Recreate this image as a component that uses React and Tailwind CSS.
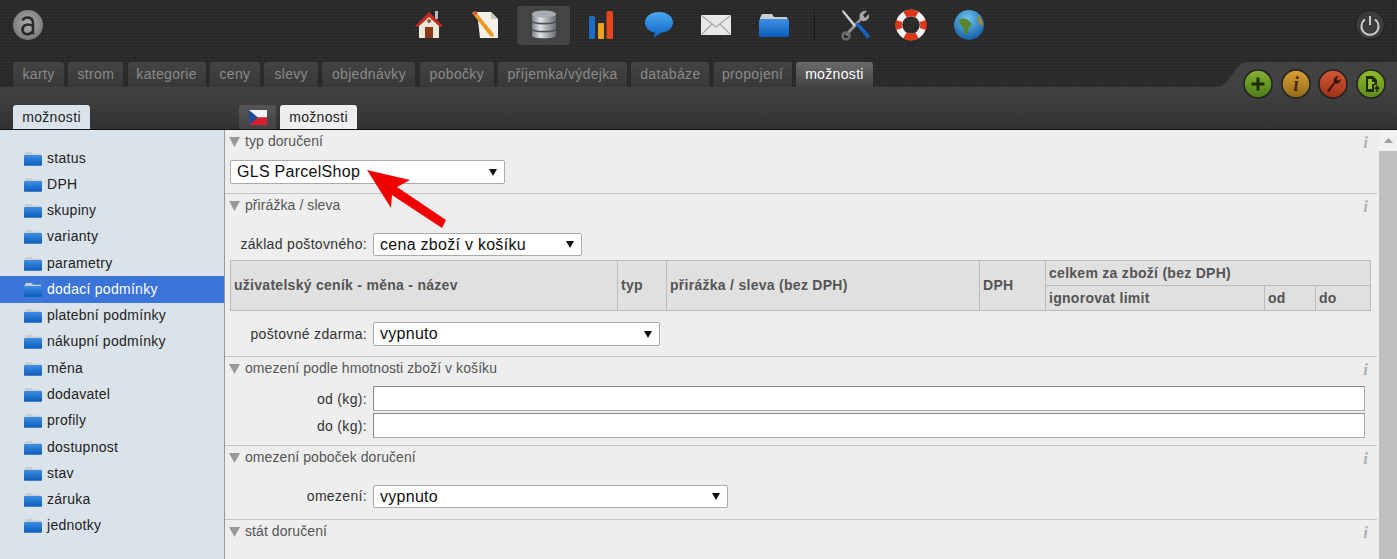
import { useId } from "react";

const mainTabs = [
  { name: "karty", width: "w-[51px]" },
  { name: "strom", width: "w-[55px]" },
  { name: "kategorie", width: "w-[78px]" },
  { name: "ceny", width: "w-[50px]" },
  { name: "slevy", width: "w-[54px]" },
  { name: "objednávky", width: "w-[93px]" },
  { name: "pobočky", width: "w-[74px]" },
  { name: "příjemka/výdejka", width: "w-[129px]" },
  { name: "databáze", width: "w-[78px]" },
  { name: "propojení", width: "w-[78px]" },
  { name: "možnosti", width: "w-[77px]" },
];
const sideItems = ["status", "DPH", "skupiny", "varianty", "parametry", "dodací podmínky", "platební podmínky", "nákupní podmínky", "měna", "dodavatel", "profily", "dostupnost", "stav", "záruka", "jednotky"];

const Logo = () => (
  <svg width="32" height="32" viewBox="0 0 32 32">
    <defs>
      <radialGradient id="logoBg" cx="0.5" cy="0.45" r="0.6">
        <stop offset="0" stopColor="#b0b0b0" />
        <stop offset="1" stopColor="#757575" />
      </radialGradient>
    </defs>
    <circle cx="16" cy="16" r="15" fill="url(#logoBg)" />
    <path d="M10.500 11.500C12.500 7.500 21 7 21 14V25.500M21 17C15 14 10.500 16 10.500 20.500C10.500 25 16 27.500 21 22.500" fill="none" stroke="#2c2c2c" strokeWidth="2.600" />
  </svg>
);

const Home = () => (
  <svg width="30" height="30" viewBox="0 0 30 30">
    <rect x="21" y="1" width="3" height="8" fill="#bbb" />
    <path d="M5 14L15 4L25 14V28H5Z" fill="#efe7d8" />
    <path d="M1 16L15 2L29 16L26 17L15 7L4 17Z" fill="#c5281c" />
    <rect x="11" y="17" width="8" height="11" fill="#8a3a1c" />
    <circle cx="15" cy="11" r="2" fill="#8a5a3a" />
  </svg>
);

const Doc = () => (
  <svg width="30" height="30" viewBox="0 0 30 30">
    <path d="M6 2H20L27 9V28H9Z" fill="#f2f0e8" />
    <path d="M20 2V9H27Z" fill="#c9c7bc" />
    <path d="M1 3L4 1L22 23L23 27L19 26Z" fill="#eb9a22" />
    <path d="M1 3L4 1L6 3.500L3 5.500Z" fill="#d9574a" />
  </svg>
);

const Database = () => {
  const id = useId();
  return (
    <svg width="28" height="32" viewBox="0 0 28 32">
      <defs>
        <linearGradient id={id} x1="0" y1="0" x2="1" y2="0">
          <stop offset="0" stopColor="#7b8088" />
          <stop offset="0.35" stopColor="#dfe2e6" />
          <stop offset="1" stopColor="#666b72" />
        </linearGradient>
      </defs>
      <path d="M2 5V27C2 30 26 30 26 27V5Z" fill={`url(#${id})`} />
      <ellipse cx="14" cy="5" rx="12" ry="3.600" fill="#a9adb3" />
      <path d="M2 12C2 15.500 26 15.500 26 12M2 20C2 23.500 26 23.500 26 20" fill="none" stroke="#4c5056" strokeWidth="1.600" />
    </svg>
  );
};

const Chart = () => (
  <svg width="26" height="30" viewBox="0 0 26 30">
    <rect x="1" y="6" width="6" height="23" rx="1.500" fill="#1c6ec4" />
    <rect x="10" y="13" width="6" height="16" rx="1" fill="#eba31f" />
    <rect x="18.500" y="1" width="6.500" height="28" rx="1.500" fill="#e5471c" />
  </svg>
);

const Bubble = () => {
  const id = useId();
  return (
    <svg width="30" height="28" viewBox="0 0 30 28">
      <defs>
        <linearGradient id={id} x1="0" y1="0" x2="0" y2="1">
          <stop offset="0" stopColor="#4aa8f0" />
          <stop offset="1" stopColor="#0f62c4" />
        </linearGradient>
      </defs>
      <path d="M15 1C7 1 1 5.500 1 11.500C1 17 6 21 11 21.500L9.500 27L17 21.800C24 21 29 17 29 11.500C29 5.500 23 1 15 1Z" fill={`url(#${id})`} />
    </svg>
  );
};

const Mail = () => (
  <svg width="30" height="20" viewBox="0 0 30 20">
    <rect x="0" y="0" width="30" height="20" rx="1" fill="#e8e8e8" />
    <path d="M1 1L15 12L29 1M1 19L11 9M29 19L19 9" fill="none" stroke="#a6a6a6" strokeWidth="1.200" />
  </svg>
);

const Folder = ({ width = 30, height = 24 }) => {
  const id = useId();
  return (
    <svg width={width} height={height} viewBox="0 0 30 24" className="shrink-0">
      <defs>
        <linearGradient id={id} x1="0" y1="0" x2="0" y2="1">
          <stop offset="0" stopColor="#3d8fe3" />
          <stop offset="1" stopColor="#0d5cbb" />
        </linearGradient>
      </defs>
      <path d="M1 5L3 1H13L15 4H28L29 7H1Z" fill="#c9ccd0" />
      <rect x="0" y="6" width="30" height="18" rx="1.500" fill={`url(#${id})`} />
    </svg>
  );
};

const Tools = () => (
  <svg width="30" height="32" viewBox="0 0 30 32">
    <path d="M5 26L21 9" stroke="#8f8f8f" strokeWidth="3" />
    <path d="M19 10C17 5 21 1 26 2L22 6L24 9L28 5C29 10 25 13 21 12Z" fill="#a8a8a8" />
    <circle cx="5" cy="27" r="3.500" fill="none" stroke="#6a6a6a" strokeWidth="2.500" />
    <path d="M2 1L4 3L15 16L13 18L2 4L1 2Z" fill="#d0d0d0" />
    <path d="M14.500 15.500L17 13L29 27L26.500 29.500Z" fill="#1565c8" />
  </svg>
);

const Ring = () => (
  <svg width="32" height="32" viewBox="0 0 32 32">
    <circle cx="16" cy="16" r="12" fill="none" stroke="#f2f2f2" strokeWidth="6.500" />
    <g fill="none" stroke="#dd3518" strokeWidth="6.500">
      <path d="M10 5.600A12 12 0 0 1 22 5.600" />
      <path d="M10 26.400A12 12 0 0 0 22 26.400" />
      <path d="M4.200 12A12 12 0 0 0 4.200 20" />
      <path d="M27.800 12A12 12 0 0 1 27.800 20" />
    </g>
  </svg>
);

const Globe = () => {
  const id = useId();
  return (
    <svg width="30" height="32" viewBox="0 0 30 32">
      <defs>
        <radialGradient id={id} cx="0.45" cy="0.3" r="0.8">
          <stop offset="0" stopColor="#6cc6f2" />
          <stop offset="1" stopColor="#0b4f9c" />
        </radialGradient>
      </defs>
      <circle cx="15" cy="16" r="15" fill={`url(#${id})`} />
      <path d="M5 11C9 8 14 10 16 13C19 15 17 19 14 18C15 22 14 25 12 26C10 23 10 19 8 17C6 16 5 14 5 11Z" fill="#58862a" />
      <path d="M23 6C27 8 29 12 29 17C26 16 24 13 24 11Z" fill="#a38a34" />
    </svg>
  );
};

const Power = () => (
  <svg width="30" height="32" viewBox="0 0 30 32">
    <circle cx="15" cy="16" r="14.500" fill="#3c3c3c" stroke="#1d1d1d" />
    <path d="M10 10.500A8.500 8.500 0 1 0 20 10.500M15 7V16" fill="none" stroke="#c9c9c9" strokeWidth="2" />
  </svg>
);

const RoundButton = ({ from, to, children }) => {
  const id = useId();
  return (
    <svg width="30" height="30" viewBox="0 0 30 30">
      <defs>
        <linearGradient id={id} x1="0" y1="0" x2="0" y2="1">
          <stop offset="0" stopColor={from} />
          <stop offset="1" stopColor={to} />
        </linearGradient>
      </defs>
      <circle cx="15" cy="15" r="14" fill={`url(#${id})`} stroke="#222" strokeWidth="1.500" />
      {children}
    </svg>
  );
};

const Flag = () => (
  <svg width="18" height="15" viewBox="0 0 18 15">
    <rect width="18" height="7.500" fill="#f3f3f3" />
    <rect y="7.500" width="18" height="7.500" fill="#d8202c" />
    <path d="M0 0L9 7.500L0 15Z" fill="#1f4e96" />
  </svg>
);

const Triangle = () => (
  <svg width="8" height="7" viewBox="0 0 8 7" className="shrink-0">
    <path d="M0 0H8L4 7Z" fill="#111" />
  </svg>
);

const Section = ({ title, className, children }) => (
  <section className={`border-b border-[#c4c4c4] ${className}`}>
    <div className="flex h-[23px] items-center justify-between pl-[4px] pr-[9px]">
      <div className="flex items-center gap-[5px] text-[14px] tracking-[0.08px] text-[#555]">
        <svg width="11" height="10" viewBox="0 0 11 10"><path d="M0 0H11L5.500 10Z" fill="#999" /></svg>
        {title}
      </div>
      <span className="mt-[2px] font-['Liberation_Serif',serif] text-[17px] font-bold italic leading-none text-[#b0b0b0]">i</span>
    </div>
    {children}
  </section>
);

const Select = ({ value, className }) => (
  <div className={`flex items-center justify-between rounded-[2px] border border-[#aaa] bg-white pl-[6px] pr-[7px] text-[16px] leading-none tracking-[0.28px] text-[#111] ${className}`}>
    {value}
    <Triangle />
  </div>
);

const Row = ({ label, className, labelClass = "", children }) => (
  <div className={`flex items-center gap-[6px] ${className}`}>
    <div className={`w-[142px] text-right text-[14px] tracking-[0.33px] text-[#333] ${labelClass}`}>{label}</div>
    {children}
  </div>
);

const thClass = "border border-[#bbb] px-[3px] text-left text-[14px] font-bold tracking-[0.28px] text-[#555]";

export default function App() {
  const topIcons = [<Home key="h" />, <Doc key="d" />, <Database key="b" />, <Chart key="c" />, <Bubble key="m" />, <Mail key="e" />, <Folder key="f" />];

  return (
    <div className="relative h-[559px] w-[1397px] overflow-hidden font-['Liberation_Sans',Arial,sans-serif]">
      {/* top bar */}
      <div className="relative h-[87px] bg-[#2b2b2b] bg-[repeating-linear-gradient(0deg,rgba(255,255,255,0.025)_0px,rgba(255,255,255,0.025)_1px,transparent_1px,transparent_3px),repeating-linear-gradient(90deg,rgba(0,0,0,0.12)_0px,rgba(0,0,0,0.12)_1px,transparent_1px,transparent_3px)]">
        <div className="flex h-[62px] items-start">
          <div className="ml-[12px] mt-[9px]"><Logo /></div>
          <div className="ml-[356px] flex h-[50px] items-center">
            {topIcons.map((icon, i) => (
              <div key={i} className="flex h-[39px] w-[57.5px] items-center justify-center">
                <div className={i === 2 ? "flex h-[39px] w-[53px] items-center justify-center rounded-[3px] bg-[#444]" : "flex items-center justify-center"}>{icon}</div>
              </div>
            ))}
            <div className="ml-[11px] h-[32px] w-px bg-[#1a1a1a]" />
            <div className="ml-[26px] flex w-[30px] justify-center"><Tools /></div>
            <div className="ml-[24px] flex w-[32px] justify-center"><Ring /></div>
            <div className="ml-[27px] flex w-[30px] justify-center"><Globe /></div>
          </div>
          <div className="ml-[371px] mt-[9px]"><Power /></div>
        </div>
        <div className="flex h-[25px] items-end pl-[13px]">
          {mainTabs.map((tab, i) => {
            const active = i === mainTabs.length - 1;
            return (
              <div key={tab.name} className={`mr-[4.3px] flex h-[25px] items-center justify-center rounded-t-[3px] text-[14px] tracking-[0.33px] ${tab.width} ${active ? "bg-gradient-to-b from-[#6a6a6a] to-[#424242] text-white" : "bg-gradient-to-b from-[#444] to-[#383838] text-[#8a8a8a]"}`}>
                {tab.name}
              </div>
            );
          })}
        </div>
        {/* raised corner with the action buttons */}
        <svg width="185" height="25" viewBox="0 0 185 25" className="absolute bottom-0 right-0">
          <path d="M3 25C10 25 13 22 16 18L24 7C28 2 31 0 38 0H185V25Z" fill="#424242" />
        </svg>
      </div>
      <div className="absolute left-[1243px] top-[69px] z-10 flex gap-[7.500px]">
        <RoundButton from="#86b236" to="#4d7a14"><path d="M15 8.500V21.500M8.500 15H21.500" stroke="#1c2c06" strokeWidth="3" /></RoundButton>
        <RoundButton from="#d9a035" to="#94691a"><text x="15" y="22" textAnchor="middle" fontFamily="Liberation Serif, serif" fontStyle="italic" fontWeight="bold" fontSize="20" fill="#4a2a08">i</text></RoundButton>
        <RoundButton from="#d65a38" to="#9c3018"><path d="M9 22L16 13C15 10 17 7 21 7L18.500 10L20.500 12L23 9.500C23 13 20 15.500 17 14.500L11 23Z" fill="#3c1006" /></RoundButton>
        <RoundButton from="#8fba2e" to="#5d8a18"><path d="M10 7H17L21 11V16H18V23H10Z" fill="#1c2c06" /><path d="M12 10H16V13H18.500V15H16V20H12Z" fill="#8fba2e" /><path d="M21 23V18M19 20L21 17.500L23 20" stroke="#1c2c06" strokeWidth="1.500" fill="none" /></RoundButton>
      </div>

      {/* second bar with sub tabs */}
      <div className="flex h-[43px] items-end border-b border-[#111] bg-gradient-to-b from-[#424242] to-[#333] pl-[13px]">
        <div className="flex h-[24px] w-[77px] items-center justify-center rounded-t-[3px] bg-[#dbe3ea] text-[14px] tracking-[0.33px] text-[#222]">možnosti</div>
        <div className="ml-[149px] flex h-[24px] w-[37px] items-center justify-center rounded-t-[3px] bg-gradient-to-b from-[#555] to-[#444]"><Flag /></div>
        <div className="ml-[4px] flex h-[24px] w-[77px] items-center justify-center rounded-t-[3px] bg-[#eee] text-[14px] tracking-[0.33px] text-[#222]">možnosti</div>
      </div>

      <div className="flex h-[429px]">
        {/* left menu */}
        <aside className="w-[225px] shrink-0 border-r border-[#999] bg-[#dbe3ea] pt-[15px]">
          {sideItems.map((item, i) => (
            <div key={item} className={`flex h-[26.28px] items-center gap-[5px] pl-[24px] text-[14px] tracking-[0.27px] ${i === 5 ? "bg-[#3b75d9] text-white" : "text-[#222]"}`}>
              <Folder width={18} height={15} />
              {item}
            </div>
          ))}
        </aside>

        {/* form */}
        <main className="w-[1154px] shrink-0 bg-[#eee] pr-[2px]">
          <Section title="typ doručení" className="h-[64px]">
            <Select value="GLS ParcelShop" className="ml-[5px] mt-[7px] h-[24px] w-[275px]" />
          </Section>
          <Section title="přirážka / sleva" className="h-[163px]">
            <Row label="základ poštovného:" className="mt-[16px]">
              <Select value="cena zboží v košíku" className="h-[23px] w-[209px]" />
            </Row>
            <table className="ml-[5px] mt-[4px] w-[1140px] table-fixed border-collapse bg-[#e0e0e0]">
              <colgroup>
                <col className="w-[387px]" />
                <col className="w-[49px]" />
                <col className="w-[313px]" />
                <col className="w-[66px]" />
                <col className="w-[219px]" />
                <col className="w-[51px]" />
                <col className="w-[55px]" />
              </colgroup>
              <thead>
                <tr className="h-[25px]">
                  <th rowSpan={2} className={thClass}>uživatelský ceník - měna - název</th>
                  <th rowSpan={2} className={thClass}>typ</th>
                  <th rowSpan={2} className={thClass}>přirážka / sleva (bez DPH)</th>
                  <th rowSpan={2} className={thClass}>DPH</th>
                  <th colSpan={3} className={thClass}>celkem za zboží (bez DPH)</th>
                </tr>
                <tr className="h-[25px]">
                  <th className={thClass}>ignorovat limit</th>
                  <th className={thClass}>od</th>
                  <th className={thClass}>do</th>
                </tr>
              </thead>
            </table>
            <Row label="poštovné zdarma:" className="mt-[11px]">
              <Select value="vypnuto" className="h-[24px] w-[287px]" />
            </Row>
          </Section>
          <Section title="omezení podle hmotnosti zboží v košíku" className="h-[89px]">
            <Row label="od (kg):" labelClass="mt-[2px]" className="mt-[6px]">
              <input className="h-[25px] w-[992px] border border-[#aaa] border-l-[#888] border-t-[#888] bg-white" />
            </Row>
            <Row label="do (kg):" labelClass="mt-[2px]" className="mt-[2px]">
              <input className="h-[25px] w-[992px] border border-[#aaa] border-l-[#888] border-t-[#888] bg-white" />
            </Row>
          </Section>
          <Section title="omezení poboček doručení" className="h-[74px]">
            <Row label="omezení:" className="mt-[16px]">
              <Select value="vypnuto" className="h-[23px] w-[355px]" />
            </Row>
          </Section>
          <Section title="stát doručení" className="h-[39px] border-b-0" />
        </main>

        {/* scrollbar */}
        <div className="flex w-[18px] shrink-0 flex-col bg-[#f1f1f1]">
          <div className="flex h-[21px] items-center justify-center">
            <svg width="9" height="5" viewBox="0 0 9 5"><path d="M0 5L4.500 0L9 5Z" fill="#a3a3a3" /></svg>
          </div>
          <div className="flex-1 bg-[#bfbfbf]" />
        </div>
      </div>

      {/* red annotation arrow */}
      <svg width="90" height="65" viewBox="0 0 90 65" className="absolute left-[362px] top-[166px] z-10">
        <path d="M5 4L48 14L35 21L84 54L80 62L30 29L29 42Z" fill="#f00000" />
      </svg>
    </div>
  );
}
